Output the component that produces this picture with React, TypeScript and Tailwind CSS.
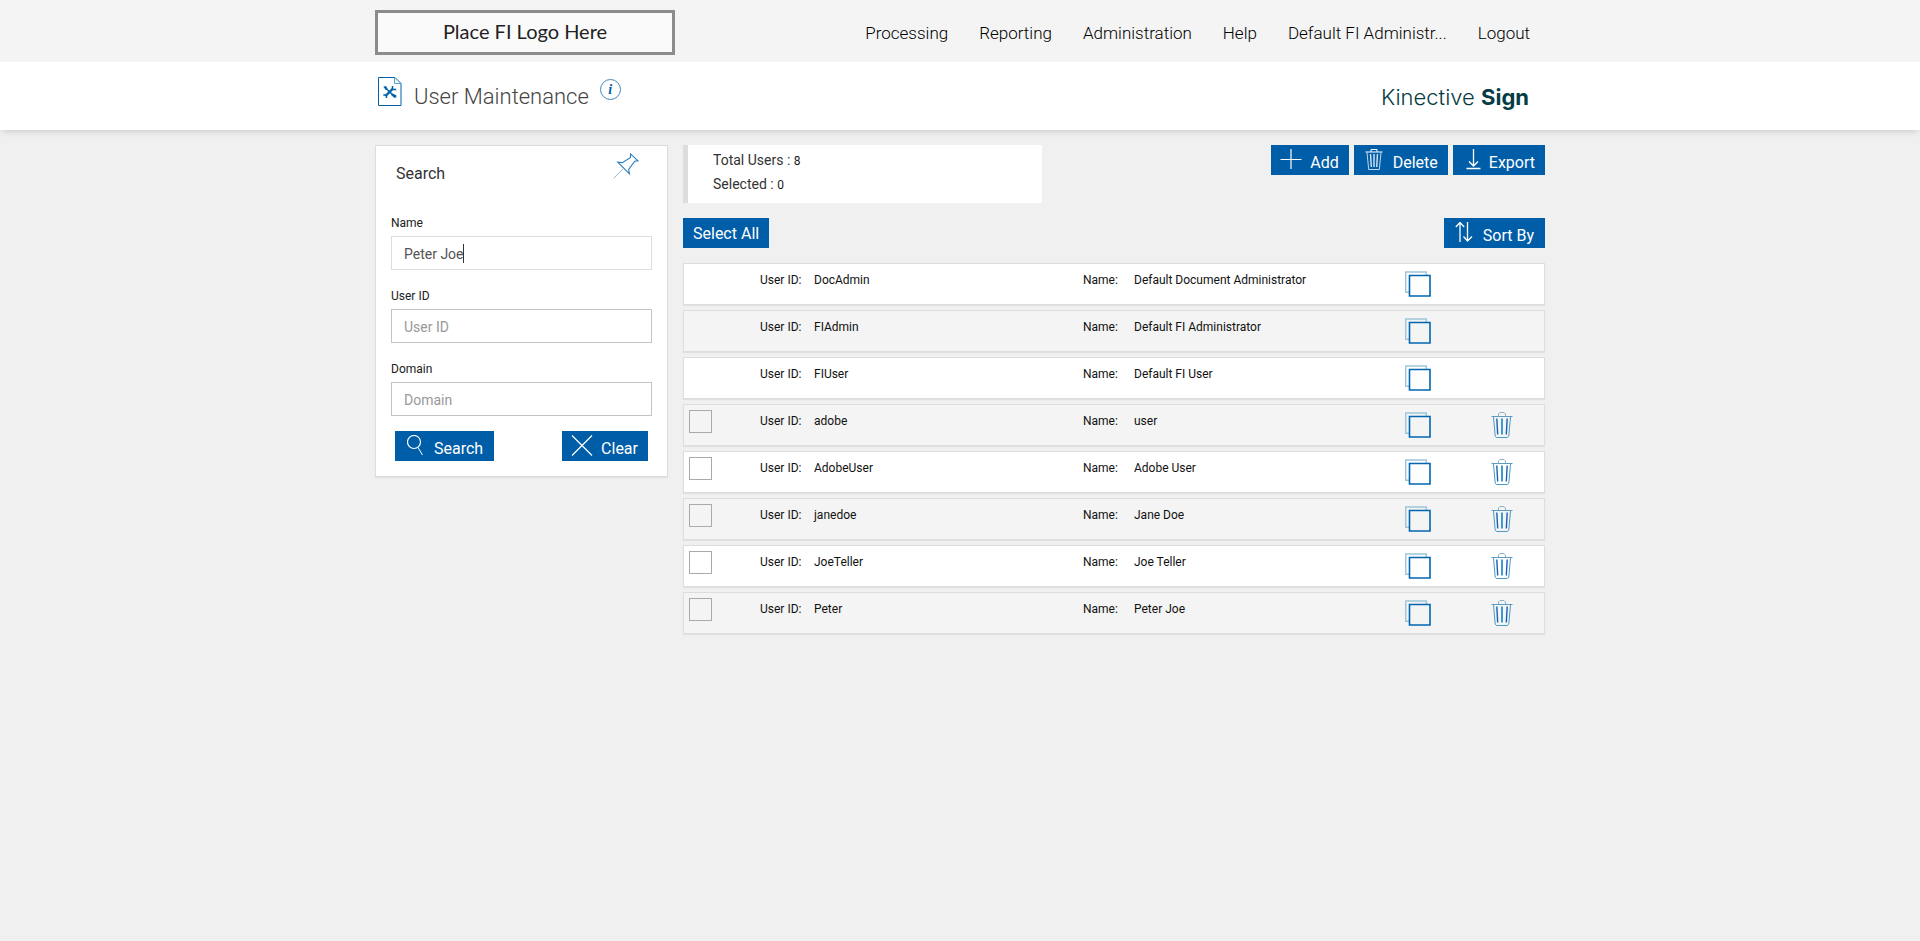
import React, { useState } from "react";

const navItems = ["Processing", "Reporting", "Administration", "Help", "Default FI Administr...", "Logout"];

const users = [
  { id: "DocAdmin", name: "Default Document Administrator", locked: true },
  { id: "FIAdmin", name: "Default FI Administrator", locked: true },
  { id: "FIUser", name: "Default FI User", locked: true },
  { id: "adobe", name: "user", locked: false },
  { id: "AdobeUser", name: "Adobe User", locked: false },
  { id: "janedoe", name: "Jane Doe", locked: false },
  { id: "JoeTeller", name: "Joe Teller", locked: false },
  { id: "Peter", name: "Peter Joe", locked: false },
];

function PageIcon() {
  return (
    <svg width="24" height="30" viewBox="0 0 24 30" fill="none" aria-hidden="true">
      <path d="M.5.5h16.500l6 6v22H.5z" stroke="#0061a9" />
      <path d="M16.500.5v6h6.500" stroke="#4fa3cc" />
      <path d="M7.500 11l9 8.500" stroke="#0061a9" strokeWidth="1.600" />
      <path d="M15 11.500L7.500 19" stroke="#0061a9" strokeWidth="2.400" />
      <path d="M5.300 9.700l2.700-.7 1.500 2.800-1.700 1.200zM14.500 16.500l3.800 1.700v2.300l-2 .3-3.300-2.800z" fill="#0061a9" />
      <path d="M14.500 12V9M15.200 12.500h3M5.300 18h2.500M8.500 21v-2.500" stroke="#0061a9" strokeWidth="1.500" />
    </svg>
  );
}

function PinIcon() {
  return (
    <svg width="26" height="26" viewBox="0 0 26 26" fill="none" aria-hidden="true">
      <path d="M17.500.8l7.500 7-3.300.4-6 8.300.8 4.300L4.800 9.200l4.500.4 8.200-5.200z" stroke="#2b7fb8" strokeWidth="1.100" />
      <path d="M10.500 15.200L.5 25.500" stroke="#8fb9cf" />
    </svg>
  );
}

function SearchIcon() {
  return (
    <svg width="18" height="22" viewBox="0 0 18 22" fill="none" stroke="#fff" aria-hidden="true">
      <circle cx="7" cy="7" r="6.500" strokeWidth="1.200" />
      <path d="M11 12.500l4.500 7.500" />
    </svg>
  );
}

function CrossIcon() {
  return (
    <svg width="22" height="22" viewBox="0 0 22 22" fill="none" stroke="#fff" aria-hidden="true">
      <path d="M1 .5l20 20M21 .5L1 20.500" strokeWidth="1.200" />
    </svg>
  );
}

function PlusIcon() {
  return (
    <svg width="22" height="22" viewBox="0 0 22 22" fill="none" stroke="#fff" aria-hidden="true">
      <path d="M11 0v20M.5 10.500h21" strokeWidth="1.200" />
    </svg>
  );
}

function WhiteTrashIcon() {
  return (
    <svg width="18" height="22" viewBox="0 0 18 22" fill="none" stroke="#fff" aria-hidden="true">
      <path d="M.5 3h17M6 3V.5h6V3" />
      <path d="M2 3.500l1.700 17h10.600L16 3.500" strokeOpacity=".75" />
      <path d="M5.500 5l.8 13M9 5v13M12.500 5l-.8 13" strokeWidth="1.500" strokeOpacity=".8" />
    </svg>
  );
}

function DownloadIcon() {
  return (
    <svg width="15" height="22" viewBox="0 0 15 22" fill="none" stroke="#fff" aria-hidden="true">
      <path d="M7.500 0v17M3 12.500L7.500 17l4.500-4.500M.5 19.500h14" strokeWidth="1.300" />
    </svg>
  );
}

function SortIcon() {
  return (
    <svg width="18" height="22" viewBox="0 0 18 22" fill="none" stroke="#fff" aria-hidden="true">
      <path d="M5 20V.5M.8 5L5 .5 9.200 5M12.500 0v19M8.500 14.500l4 4.500 4.500-4.500" strokeWidth="1.300" />
    </svg>
  );
}

function CopyIcon() {
  return (
    <svg width="26" height="26" viewBox="0 0 26 26" fill="none" aria-hidden="true">
      <path d="M4 21.300H.7V1h20.600v3" stroke="#9fc5d8" strokeWidth="1.500" />
      <path d="M4.500 4.500h20.500v20.500H4.500z" stroke="#0066b0" strokeWidth="1.600" />
    </svg>
  );
}

function TrashIcon() {
  return (
    <svg width="22" height="26" viewBox="0 0 22 26" fill="none" aria-hidden="true">
      <path d="M7.500 4V2l1.500-1.500h4L14.500 2v2" stroke="#8fb0c6" />
      <path d="M.5 4.500h21" stroke="#5f9cc4" />
      <path d="M2.500 5l1.700 19 1.300 1.500h11l1.300-1.500L19.500 5" stroke="#4a9ac8" />
      <path d="M5.800 6.500l.9 16M16.200 6.500l-.9 16" stroke="#1a5fb0" strokeWidth="1.400" />
      <path d="M11 6.500v16" stroke="#2a92cc" strokeWidth="1.800" />
    </svg>
  );
}

type ActionButtonProps = {
  icon: React.ReactNode;
  label: string;
  className: string;
};

function ActionButton({ icon, label, className }: ActionButtonProps) {
  return (
    <button type="button" className={`flex h-[30px] items-start bg-[#005da8] pt-1 text-base leading-6 text-white ${className}`}>
      {icon}
      <span className="pt-[2px]">{label}</span>
    </button>
  );
}

type FieldProps = {
  id: string;
  label: string;
  value: string;
  onChange: (value: string) => void;
  active?: boolean;
};

function Field({ id, label, value, onChange, active }: FieldProps) {
  const [touched, setTouched] = useState(false);
  const staticCaret = active && !touched;

  return (
    <div className="flex flex-col gap-[3px]">
      <label htmlFor={id} className="text-xs leading-5 text-[#212121]">
        {label}
      </label>
      <div className={`relative flex h-[34px] items-center border bg-white px-3 pt-[2px] ${active ? "border-[#ddd]" : "border-[#c4c4c4]"}`}>
        <input
          id={id}
          type="text"
          value={value}
          placeholder={label}
          onFocus={() => setTouched(true)}
          onChange={(event) => onChange(event.target.value)}
          className="w-full min-w-0 bg-transparent text-sm text-[#555] outline-none placeholder:text-[#999]"
        />
        {staticCaret && <span aria-hidden="true" className="absolute top-[7px] left-[71px] h-[19px] w-px bg-[#333]" />}
      </div>
    </div>
  );
}

export default function App() {
  const [name, setName] = useState("Peter Joe");
  const [userId, setUserId] = useState("");
  const [domain, setDomain] = useState("");

  return (
    <div className="min-h-screen bg-[#f0f0f0] font-['Roboto',sans-serif] text-[#212121]">
      <header className="bg-[#f4f4f4]">
        <div className="mx-auto flex h-[62px] max-w-[1170px] items-start justify-between pt-[10px]">
          <div className="flex h-[45px] w-[300px] items-center justify-center border-3 border-[#8c8c8c] bg-[#fafafa] pb-1 font-['Lato',sans-serif] text-xl text-[#222]">
            Place FI Logo Here
          </div>
          <nav className="flex gap-[31px] pt-[11px] pr-[15px] text-[17px] leading-6 font-light text-black">
            {navItems.map((item) => (
              <a key={item} href="#">
                {item}
              </a>
            ))}
          </nav>
        </div>
      </header>

      <div className="bg-white shadow-[0_4px_6px_-2px_rgba(0,0,0,0.14)]">
        <div className="mx-auto flex h-[68px] max-w-[1170px] items-start justify-between pr-4 pl-[3px]">
          <div className="flex items-start pt-[15px]">
            <PageIcon />
            <h1 className="pt-[5px] pl-3 text-[22px] leading-[30px] font-light text-[#444]">User Maintenance</h1>
            <button
              type="button"
              aria-label="Page information"
              className="mt-[2px] ml-[11px] flex size-[21px] items-center justify-center rounded-full border border-[#3f87bb] font-['Liberation_Serif',serif] text-sm leading-none font-bold text-[#0061a9] italic"
            >
              i
            </button>
          </div>
          <div className="pt-5 font-['Inter',sans-serif] text-[22px] leading-[30px] font-light text-[#053c45]">
            Kinective <span className="font-bold">Sign</span>
          </div>
        </div>
      </div>

      <main className="mx-auto flex max-w-[1170px] items-start gap-[15px] pt-[15px]">
        <form className="w-[293px] shrink-0 border border-[#ddd] bg-white px-[15px] pb-[15px] shadow-[0_1px_1px_rgba(0,0,0,0.06)]" onSubmit={(event) => event.preventDefault()}>
          <div className="flex h-[67px] items-start justify-between pt-[7px] pr-[13px] pl-[5px]">
            <h2 className="pt-[9px] text-base leading-6 text-[#333]">Search</h2>
            <button type="button" aria-label="Pin search panel">
              <PinIcon />
            </button>
          </div>
          <div className="flex flex-col gap-4">
            <Field id="name" label="Name" value={name} onChange={setName} active />
            <Field id="user-id" label="User ID" value={userId} onChange={setUserId} />
            <Field id="domain" label="Domain" value={domain} onChange={setDomain} />
          </div>
          <div className="mt-[15px] flex justify-between px-1">
            <ActionButton icon={<SearchIcon />} label="Search" className="gap-[9px] pr-[11px] pl-3" />
            <ActionButton icon={<CrossIcon />} label="Clear" className="gap-2 pr-[10px] pl-[9px]" />
          </div>
        </form>

        <section className="min-w-0 flex-1">
          <div className="flex items-start justify-between">
            <div className="h-[58px] w-[359px] border-l-5 border-[#ddd] bg-white pt-[3px] pl-[25px] text-sm leading-6 text-[#333]">
              <p>
                Total Users : <span className="text-xs text-[#1a1a1a]">8</span>
              </p>
              <p>
                Selected : <span className="text-xs text-[#1a1a1a]">0</span>
              </p>
            </div>
            <div className="flex gap-[5px]">
              <ActionButton icon={<PlusIcon />} label="Add" className="gap-2 pr-[10px] pl-[9px]" />
              <ActionButton icon={<WhiteTrashIcon />} label="Delete" className="gap-[10px] pr-[10px] pl-[11px]" />
              <ActionButton icon={<DownloadIcon />} label="Export" className="gap-2 pr-[10px] pl-[13px]" />
            </div>
          </div>

          <div className="mt-[15px] flex justify-between">
            <button type="button" className="flex h-[30px] items-start bg-[#005da8] px-[10px] pt-1 text-base leading-6 text-white">
              Select All
            </button>
            <ActionButton icon={<SortIcon />} label="Sort By" className="gap-[10px] pr-[11px] pl-[11px]" />
          </div>

          <ul className="mt-[15px] flex flex-col gap-[5px] text-xs leading-5 text-[#111]">
            {users.map((user) => (
              <li
                key={user.id}
                className="flex h-[42px] items-start border border-[#ddd] bg-white shadow-[0_1px_1px_rgba(0,0,0,0.06)] even:bg-[#f4f4f4]"
              >
                <div className="w-[76px] shrink-0 pt-[5px] pl-[5px]">
                  {!user.locked && (
                    <input
                      type="checkbox"
                      aria-label={`Select ${user.id}`}
                      className="block size-[23px] appearance-none border border-[#aaa] checked:bg-[#005da8]"
                    />
                  )}
                </div>
                <dl className="flex flex-1 pt-[6px] pr-[2px]">
                  <dt className="w-[54px]">User ID:</dt>
                  <dd className="flex-1">{user.id}</dd>
                  <dt className="w-[51px]">Name:</dt>
                  <dd className="flex-1">{user.name}</dd>
                </dl>
                <div className="flex shrink-0 items-start pt-[7px]">
                  <button type="button" aria-label={`Copy ${user.id}`}>
                    <CopyIcon />
                  </button>
                  <div className="ml-[60px] w-[53px]">
                    {!user.locked && (
                      <button type="button" aria-label={`Delete ${user.id}`}>
                        <TrashIcon />
                      </button>
                    )}
                  </div>
                </div>
              </li>
            ))}
          </ul>
        </section>
      </main>
    </div>
  );
}
